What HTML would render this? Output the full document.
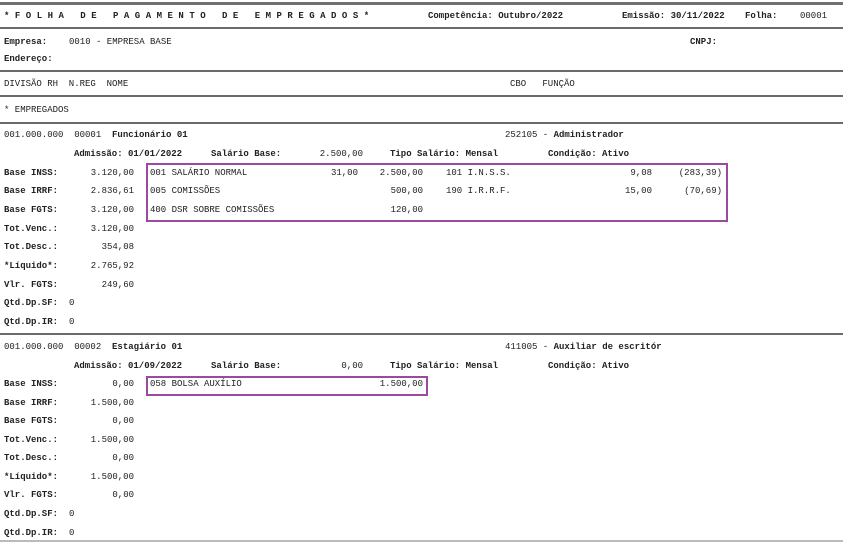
<!DOCTYPE html>
<html><head><meta charset="utf-8"><style>
body{margin:0;width:847px;height:545px;background:#fff;position:relative;overflow:hidden;font-family:"Liberation Mono",monospace;font-size:9px;color:#222;}
div{position:absolute;white-space:pre;line-height:10px}
.b{font-weight:bold}
.r{text-align:right}
.h{height:0;left:0;width:843px;border-top:2px solid #6a6a6a}
.box{border:2px solid #9b4aa0;box-sizing:border-box}
</style></head><body>
<div class="h" style="top:2px;border-top:3px solid #707070"></div>
<div class="h" style="top:27px"></div>
<div class="h" style="top:70px"></div>
<div class="h" style="top:95px"></div>
<div class="h" style="top:122px"></div>
<div class="h" style="top:333px"></div>
<div class="h" style="top:540px;border-top:2px solid #bbb"></div>

<div class="b" style="left:4px;top:11px;letter-spacing:5.5px">*FOLHA DE PAGAMENTO DE EMPREGADOS*</div>
<div class="b" style="left:428px;top:11px">Competência: Outubro/2022</div>
<div class="b" style="left:622px;top:11px">Emissão: 30/11/2022</div>
<div class="b" style="left:745px;top:11px">Folha:</div>
<div style="left:800px;top:11px">00001</div>

<div class="b" style="left:4px;top:37px">Empresa:</div>
<div style="left:69px;top:37px">0010 - EMPRESA BASE</div>
<div class="b" style="left:690px;top:37px">CNPJ:</div>
<div class="b" style="left:4px;top:54px">Endereço:</div>
<div style="left:4px;top:79px">DIVISÃO RH  N.REG  NOME</div>
<div style="left:510px;top:79px">CBO   FUNÇÃO</div>
<div style="left:4px;top:105px">* EMPREGADOS</div>

<!-- emp 1 -->
<div style="left:4px;top:130px">001.000.000  00001  <b>Funcionário 01</b></div>
<div style="left:505px;top:130px">252105 - <b>Administrador</b></div>
<div class="b" style="left:74px;top:149px">Admissão: 01/01/2022</div>
<div class="b" style="left:211px;top:149px">Salário Base:</div>
<div class="r" style="right:484px;top:149px">2.500,00</div>
<div class="b" style="left:390px;top:149px">Tipo Salário: Mensal</div>
<div class="b" style="left:548px;top:149px">Condição: Ativo</div>

<div class="box" style="left:146px;top:163px;width:582px;height:59px"></div>
<div style="left:150px;top:168px">001 SALÁRIO NORMAL</div>
<div class="r" style="right:489px;top:168px">31,00</div>
<div class="r" style="right:424px;top:168px">2.500,00</div>
<div style="left:446px;top:168px">101 I.N.S.S.</div>
<div class="r" style="right:195px;top:168px">9,08</div>
<div class="r" style="right:125px;top:168px">(283,39)</div>
<div style="left:150px;top:186px">005 COMISSÕES</div>
<div class="r" style="right:424px;top:186px">500,00</div>
<div style="left:446px;top:186px">190 I.R.R.F.</div>
<div class="r" style="right:195px;top:186px">15,00</div>
<div class="r" style="right:125px;top:186px">(70,69)</div>
<div style="left:150px;top:205px">400 DSR SOBRE COMISSÕES</div>
<div class="r" style="right:424px;top:205px">120,00</div>

<div class="b" style="left:4px;top:168px">Base INSS:</div><div class="r" style="right:713px;top:168px">3.120,00</div>
<div class="b" style="left:4px;top:186px">Base IRRF:</div><div class="r" style="right:713px;top:186px">2.836,61</div>
<div class="b" style="left:4px;top:205px">Base FGTS:</div><div class="r" style="right:713px;top:205px">3.120,00</div>
<div class="b" style="left:4px;top:224px">Tot.Venc.:</div><div class="r" style="right:713px;top:224px">3.120,00</div>
<div class="b" style="left:4px;top:242px">Tot.Desc.:</div><div class="r" style="right:713px;top:242px">354,08</div>
<div class="b" style="left:4px;top:261px">*Líquido*:</div><div class="r" style="right:713px;top:261px">2.765,92</div>
<div class="b" style="left:4px;top:280px">Vlr. FGTS:</div><div class="r" style="right:713px;top:280px">249,60</div>
<div class="b" style="left:4px;top:298px">Qtd.Dp.SF:</div><div style="left:69px;top:298px">0</div>
<div class="b" style="left:4px;top:317px">Qtd.Dp.IR:</div><div style="left:69px;top:317px">0</div>

<!-- emp 2 -->
<div style="left:4px;top:342px">001.000.000  00002  <b>Estagiário 01</b></div>
<div style="left:505px;top:342px">411005 - <b>Auxiliar de escritór</b></div>
<div class="b" style="left:74px;top:361px">Admissão: 01/09/2022</div>
<div class="b" style="left:211px;top:361px">Salário Base:</div>
<div class="r" style="right:484px;top:361px">0,00</div>
<div class="b" style="left:390px;top:361px">Tipo Salário: Mensal</div>
<div class="b" style="left:548px;top:361px">Condição: Ativo</div>

<div class="box" style="left:146px;top:376px;width:282px;height:20px"></div>
<div style="left:150px;top:379px">058 BOLSA AUXÍLIO</div>
<div class="r" style="right:424px;top:379px">1.500,00</div>

<div class="b" style="left:4px;top:379px">Base INSS:</div><div class="r" style="right:713px;top:379px">0,00</div>
<div class="b" style="left:4px;top:398px">Base IRRF:</div><div class="r" style="right:713px;top:398px">1.500,00</div>
<div class="b" style="left:4px;top:416px">Base FGTS:</div><div class="r" style="right:713px;top:416px">0,00</div>
<div class="b" style="left:4px;top:435px">Tot.Venc.:</div><div class="r" style="right:713px;top:435px">1.500,00</div>
<div class="b" style="left:4px;top:453px">Tot.Desc.:</div><div class="r" style="right:713px;top:453px">0,00</div>
<div class="b" style="left:4px;top:472px">*Líquido*:</div><div class="r" style="right:713px;top:472px">1.500,00</div>
<div class="b" style="left:4px;top:490px">Vlr. FGTS:</div><div class="r" style="right:713px;top:490px">0,00</div>
<div class="b" style="left:4px;top:509px">Qtd.Dp.SF:</div><div style="left:69px;top:509px">0</div>
<div class="b" style="left:4px;top:528px">Qtd.Dp.IR:</div><div style="left:69px;top:528px">0</div>
</body></html>
